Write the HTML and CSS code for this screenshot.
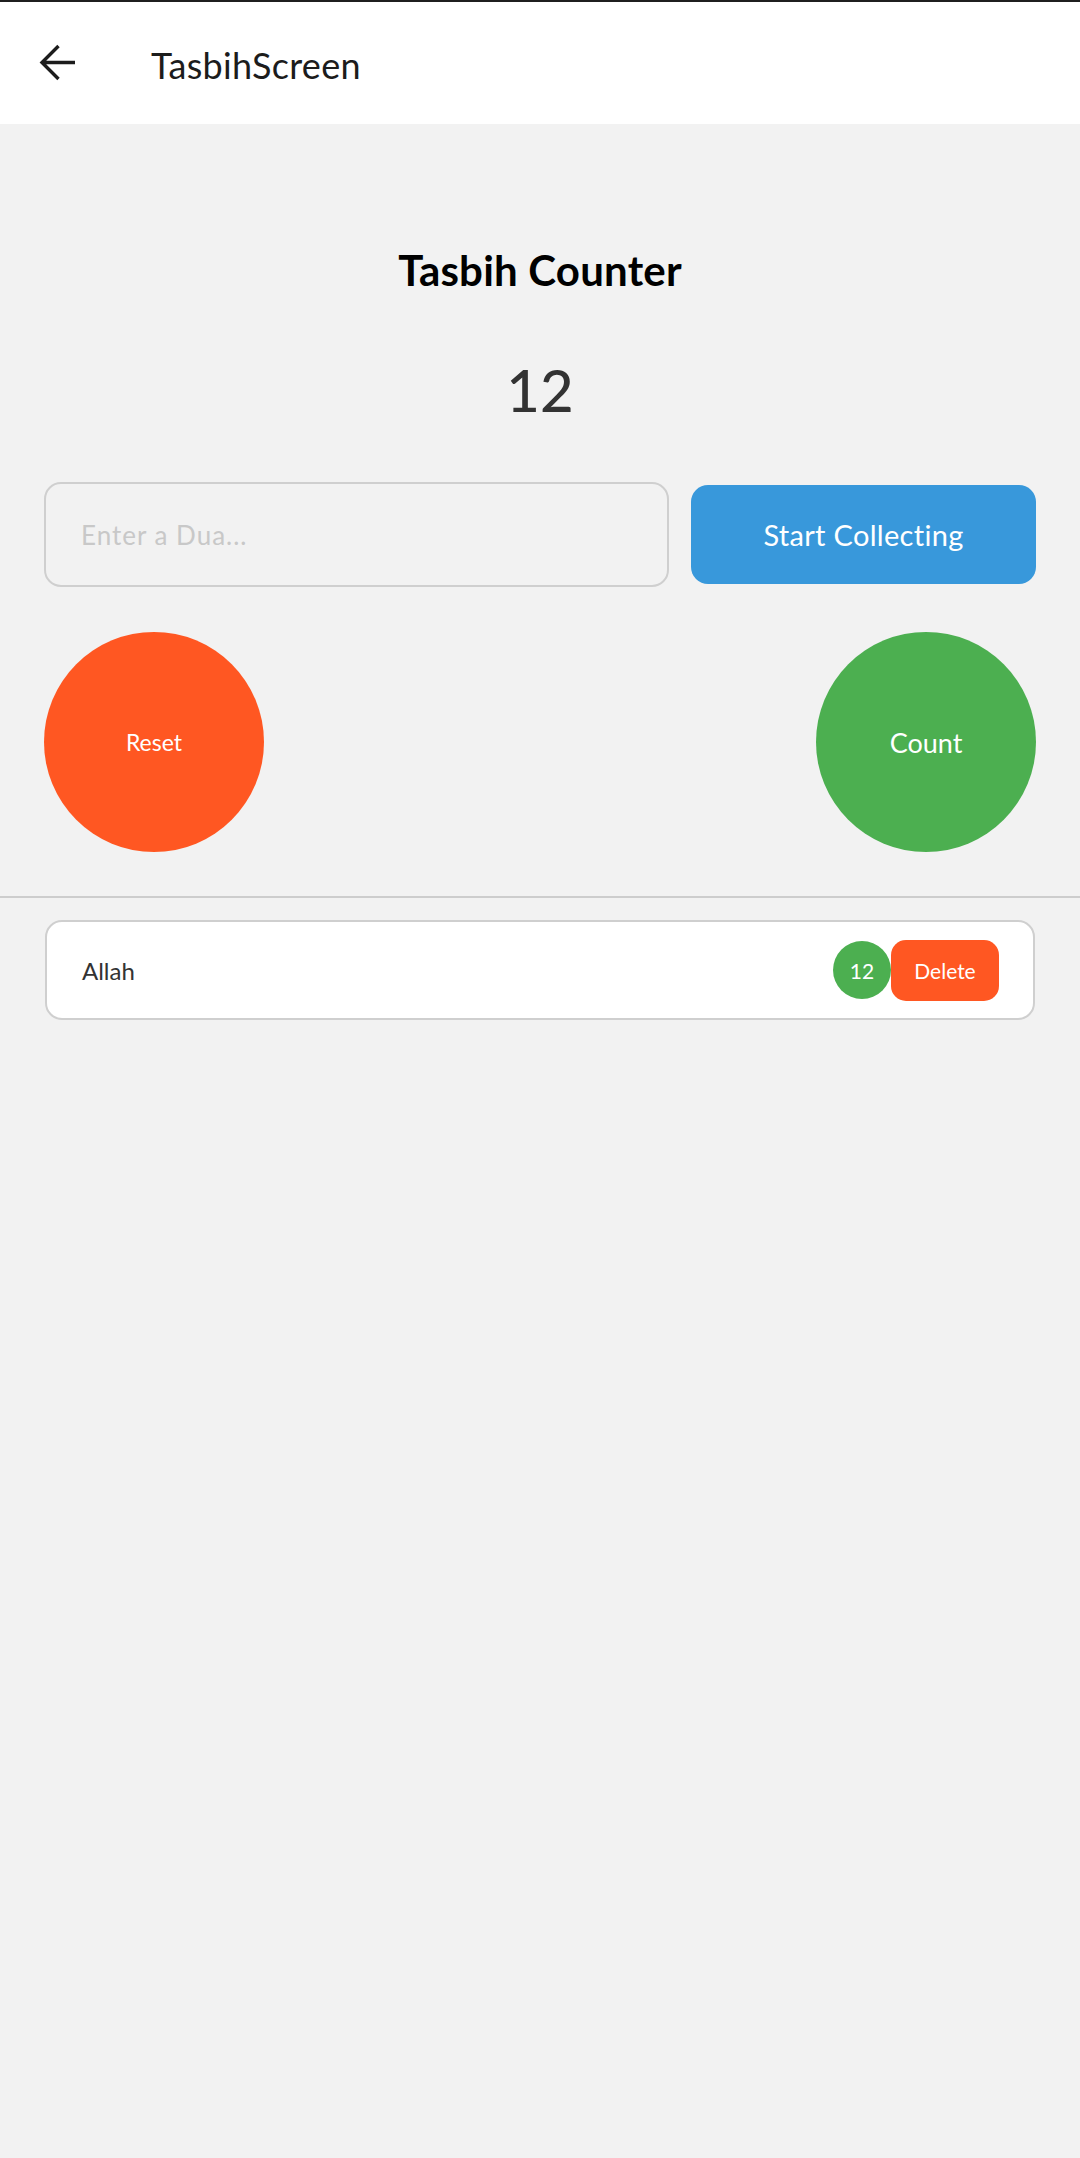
FILE: index.html
```html
<!DOCTYPE html>
<html lang="en">
<head>
<meta charset="utf-8">
<title>TasbihScreen</title>
<link rel="stylesheet" href="styles.css">
</head>
<body>
<header class="appbar">
  <svg class="back" width="40" height="40" viewBox="0 0 40 40" aria-hidden="true">
    <path d="M37 19.5H4 M20.5 3 L4 19.5 L20.5 36" fill="none" stroke="#1c1c1c" stroke-width="3.4" stroke-linecap="butt" stroke-linejoin="miter"/>
  </svg>
  <span class="appbar-title">TasbihScreen</span>
</header>
<main class="content">
  <h1 class="heading">Tasbih Counter</h1>
  <div class="counter">12</div>
  <div class="entry-row">
    <input class="dua-input" type="text" placeholder="Enter a Dua...">
    <button class="btn-start">Start Collecting</button>
  </div>
  <div class="circle-row">
    <button class="circle circle-reset">Reset</button>
    <button class="circle circle-count">Count</button>
  </div>
</main>
<hr class="divider">
<section class="list">
  <div class="card">
    <span class="card-name">Allah</span>
    <div class="card-actions">
      <span class="badge">12</span>
      <button class="btn-delete">Delete</button>
    </div>
  </div>
</section>
</body>
</html>
```
FILE: styles.css
```css
html, body {
  margin: 0;
  padding: 0;
}
body {
  width: 1080px;
  min-height: 2158px;
  background: #f2f2f2;
  font-family: "Lato", "Noto Sans", sans-serif;
  color: #222;
}
.appbar {
  height: 122px;
  border-top: 2px solid #1f1f1f;
  background: #ffffff;
  display: flex;
  align-items: center;
  box-sizing: content-box;
}
.back {
  margin-left: 38px;
  flex: none;
}
.appbar-title {
  margin-left: 73px;
  font-size: 36px;
  color: #1c1c1c;
  letter-spacing: 0.3px;
  padding-top: 4px;
}
.content {
  padding: 0 44px;
}
.heading {
  margin: 119px 0 0;
  text-align: center;
  font-size: 42px;
  font-weight: 700;
  color: #000;
  line-height: 54px;
  letter-spacing: 0.2px;
}
.counter {
  margin-top: 58px;
  text-align: center;
  font-size: 58px;
  line-height: 70px;
  font-weight: 500;
  color: #333;
}
.entry-row {
  margin-top: 57px;
  display: flex;
  align-items: center;
  gap: 22px;
}
.dua-input {
  flex: 1;
  height: 105px;
  box-sizing: border-box;
  border: 2px solid #cfcfcf;
  border-radius: 17px;
  background: #f2f2f2;
  padding: 0 0 0 35px;
  font-family: inherit;
  font-size: 26px;
  color: #333;
  outline: none;
}
.dua-input::placeholder {
  color: #c8c8c8;
  letter-spacing: 1px;
}
.btn-start {
  width: 345px;
  height: 99px;
  border: none;
  border-radius: 17px;
  background: #3898db;
  color: #fff;
  font-family: inherit;
  font-size: 29px;
  letter-spacing: 0.3px;
  padding: 0;
}
.circle-row {
  margin-top: 45px;
  display: flex;
  justify-content: space-between;
}
.circle {
  width: 220px;
  height: 220px;
  border-radius: 50%;
  border: none;
  color: #fff;
  font-family: inherit;
  padding: 0;
}
.circle-reset {
  background: #ff5722;
  font-size: 23px;
}
.circle-count {
  background: #4caf50;
  font-size: 27px;
}
.divider {
  margin: 44px 0 0;
  border: none;
  border-top: 2px solid #cdcdcd;
  height: 0;
}
.list {
  padding: 22px 45px 0;
}
.card {
  height: 100px;
  box-sizing: border-box;
  border: 2px solid #cfcfcf;
  border-radius: 17px;
  background: #fff;
  display: flex;
  align-items: center;
  justify-content: space-between;
  padding: 0 34px 0 35px;
}
.card-name {
  font-size: 24px;
  color: #333;
}
.card-actions {
  display: flex;
  align-items: center;
}
.badge {
  width: 58px;
  height: 58px;
  border-radius: 50%;
  background: #4caf50;
  color: #fff;
  font-size: 21px;
  display: flex;
  align-items: center;
  justify-content: center;
}
.btn-delete {
  width: 108px;
  height: 61px;
  border: none;
  border-radius: 15px;
  background: #ff5722;
  color: #fff;
  font-family: inherit;
  font-size: 21px;
  padding: 0;
}
```
